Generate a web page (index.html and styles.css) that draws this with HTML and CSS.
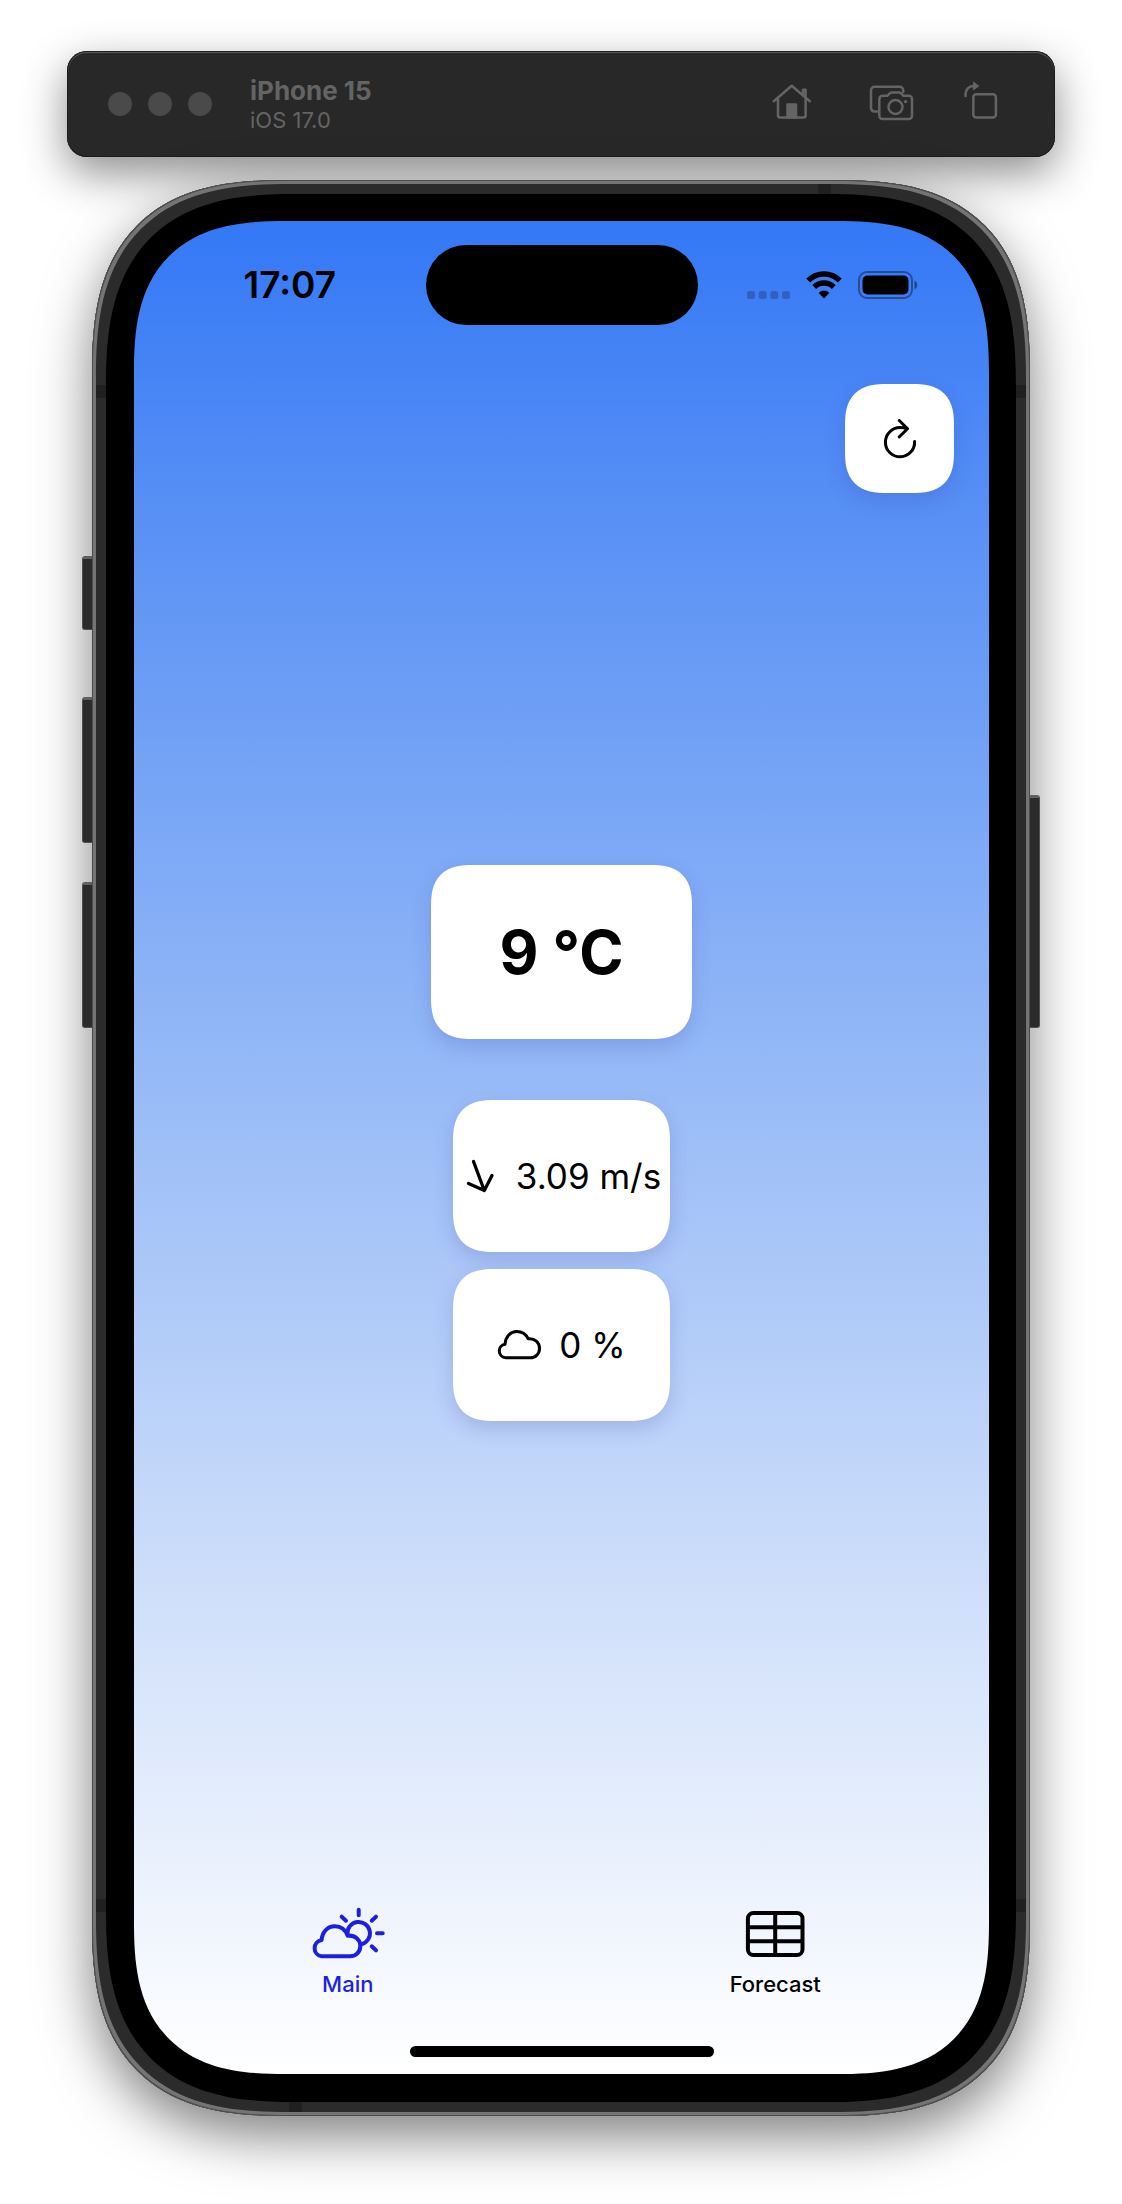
FILE: index.html
```html
<!DOCTYPE html>
<html lang="en">
<head>
<meta charset="utf-8">
<meta name="viewport" content="width=device-width, initial-scale=1">
<title>Weather – iPhone 15</title>
<link rel="stylesheet" href="styles.css">
</head>
<body>
<header class="toolbar">
  <div class="lights"><span class="light"></span><span class="light"></span><span class="light"></span></div>
  <div class="device">
    <h1 class="device-name">iPhone 15</h1>
    <p class="device-os">iOS 17.0</p>
  </div>
  <div class="tools">
    <button class="tool" type="button" aria-label="Home">
      <svg width="40" height="40" viewBox="0 0 40 40" fill="none" stroke="currentColor" stroke-width="2.500" stroke-linecap="round" stroke-linejoin="round"><path d="M1.8 20.3 19.7 4.8 37.8 20.3M6 17.5V34.5a2 2 0 0 0 2 2H31.6a2 2 0 0 0 2-2V17.5"/><path d="M31 14V8.8h2.6V17" /><path d="M15.5 36.500V23.500H24V36.500Z" fill="currentColor"/></svg>
    </button>
    <button class="tool" type="button" aria-label="Screenshot">
      <svg width="52" height="40" viewBox="0 0 52 40" fill="none" stroke="currentColor" stroke-width="2.500" stroke-linecap="round" stroke-linejoin="round"><path d="M15.500 30.500H12.400a3.400 3.400 0 0 1-3.400-3.400V9.200A3.400 3.400 0 0 1 12.400 5.800H37.800a3.400 3.400 0 0 1 3.400 3.400V11"/><path d="M20.500 14.800H25.200L28 12.200Q28.600 11.600 29.500 11.600H37.300Q38.200 11.600 38.800 12.200L41.500 14.800H46.800A3.200 3.200 0 0 1 50 18V34.800A3.200 3.200 0 0 1 46.800 38H20.500A3.200 3.200 0 0 1 17.300 34.800V18A3.200 3.200 0 0 1 20.500 14.800Z"/><circle cx="33.500" cy="26" r="7"/><circle cx="43.600" cy="20.600" r="1.700" fill="currentColor" stroke="none"/></svg>
    </button>
    <button class="tool" type="button" aria-label="Rotate">
      <svg width="34" height="40" viewBox="0 0 34 40" fill="none" stroke="currentColor" stroke-width="2.500" stroke-linecap="round" stroke-linejoin="round"><rect x="9.300" y="13.300" width="22.600" height="23.200" rx="3"/><path d="M1.500 15V13A8 8 0 0 1 9.300 5H10.500"/><path d="M9.700 1.300 14.800 5 9.700 8.700Z" fill="currentColor" stroke-width="1"/></svg>
    </button>
  </div>
</header>

<div class="phone">
  <span class="key key-action"></span>
  <span class="key key-up"></span>
  <span class="key key-down"></span>
  <span class="key key-power"></span>
  <span class="band band-top"></span>
  <span class="band band-bottom"></span>
  <span class="band band-side band-left band-upper"></span>
  <span class="band band-side band-right band-upper"></span>
  <span class="band band-side band-left band-lower"></span>
  <span class="band band-side band-right band-lower"></span>

  <div class="screen">
    <div class="status">
      <time class="clock">17:07</time>
      <div class="island"></div>
      <div class="signals">
        <svg width="43" height="28" viewBox="0 0 43 28" fill="#000" fill-opacity=".22"><rect x="0" y="20" width="8" height="8" rx="2.500"/><rect x="11.700" y="20" width="8" height="8" rx="2.500"/><rect x="23.300" y="20" width="8" height="8" rx="2.500"/><rect x="35" y="20" width="8" height="8" rx="2.500"/></svg>
        <svg width="36" height="28" viewBox="0 0 36 28"><path d="M2.200 9.500A22.500 22.500 0 0 1 33.800 9.500" fill="none" stroke="#000" stroke-width="5.400"/><path d="M8.200 16A14 14 0 0 1 27.800 16" fill="none" stroke="#000" stroke-width="5.400"/><path d="M12.600 21.700Q18 17.300 23.400 21.700L18 27.500Z"/></svg>
        <svg width="60" height="28" viewBox="0 0 60 28"><rect x="1" y="1" width="53" height="26" rx="8" fill="none" stroke="#000" stroke-opacity=".38" stroke-width="2"/><rect x="4.500" y="4.500" width="46" height="19" rx="5"/><path d="M56.500 9.500A5 5 0 0 1 56.500 18.500Z" fill-opacity=".45"/></svg>
      </div>
    </div>

    <div class="actions">
      <button class="card refresh" type="button" aria-label="Refresh">
        <svg width="36" height="40" viewBox="0 0 36 40" fill="none" stroke="currentColor" stroke-width="3" stroke-linecap="round" stroke-linejoin="round"><path d="M32.600 22.500A14.600 14.600 0 1 1 18 8.600Q22 8.600 25 9.600"/><path d="M17.300 1.500 25.500 9.700 17.300 17.900"/></svg>
      </button>
    </div>

    <main class="readings">
      <section class="card temperature">9 °C</section>
      <section class="card reading">
        <svg width="36" height="36" viewBox="0 0 36 36" fill="none" stroke="currentColor" stroke-width="3.300" stroke-linecap="round" stroke-linejoin="round"><path d="M11.500 3.500 22.300 32.500M6.500 25.500 22.300 32.500 30 17.500"/></svg>
        <span>3.09 m/s</span>
      </section>
      <section class="card reading">
        <svg width="44" height="32" viewBox="0 0 44 32" fill="none" stroke="currentColor" stroke-width="3" stroke-linejoin="round"><path d="M8.700 28.800A6.800 6.800 0 0 1 8 15.300C8.600 7.500 13.500 2.500 19.800 2.500C24.800 2.500 29 5.400 31.200 9.800C37.800 9 42.500 13.600 42.500 19.200C42.500 24.800 38.600 28.800 33.200 28.800Z"/></svg>
        <span>0 %</span>
      </section>
    </main>

    <nav class="tabs">
      <a class="tab tab-active" href="#main" aria-current="page">
        <svg width="74" height="52" viewBox="0 0 74 52" fill="none" stroke="currentColor" stroke-width="4" stroke-linecap="round" stroke-linejoin="round"><path d="M10.500 49.300A8.200 8.200 0 0 1 10.600 33.100C11.200 24.700 16.500 19.300 24 19.300C29.600 19.300 34.400 22.700 36.800 28.700C44 28 49.300 32.700 49.300 39C49.300 45 45 49.300 39.200 49.300Z"/><path d="M36.400 27A11.300 11.300 0 1 1 50.500 37.200"/><path d="M47.700 2.700V8.300M66 26.300H71.700M60.700 13.700 65 9.700M35 13.700 30.700 9.700M60.700 39.300 65 43.300"/></svg>
        <span>Main</span>
      </a>
      <a class="tab" href="#forecast">
        <svg width="60" height="52" viewBox="0 0 60 52" fill="none" stroke="currentColor" stroke-width="4"><rect x="2.900" y="6" width="54.600" height="42" rx="5.500"/><path d="M3 20.300H57.500M3 34.300H57.500M30.200 6V48"/></svg>
        <span>Forecast</span>
      </a>
    </nav>
    <div class="home-bar"></div>
  </div>
</div>
</body>
</html>
```
FILE: styles.css
```css
* {
  box-sizing: border-box;
}

body {
  margin: 0;
  padding: 51px 67px 88px;
  background: #fff;
  color: #000;
  font-family: Inter, "Liberation Sans", sans-serif;
}

button {
  padding: 0;
  border: 0;
  background: none;
  color: inherit;
  font: inherit;
}

svg {
  display: block;
  flex: none;
}

/* Simulator window bar */
.toolbar {
  position: relative;
  display: flex;
  align-items: center;
  min-height: 106px;
  padding: 0 57px 0 41px;
  border-radius: 20px;
  background: #282828;
  box-shadow: inset 0 0 0 1px #1c1c1c, inset 0 1px 0 1px #5a5a5a, 0 16px 44px rgba(0, 0, 0, .45);
  color: #646464;
}

.lights {
  display: flex;
  gap: 16px;
}

.light {
  width: 24px;
  height: 24px;
  border-radius: 50%;
  background: #4a4a4a;
}

.device {
  flex: 1;
  margin-left: 38px;
  padding-top: 2px;
}

.device-name,
.device-os {
  margin: 0;
}

.device-name {
  font-size: 26px;
  line-height: 30px;
  font-weight: 700;
}

.device-os {
  font-size: 22px;
  line-height: 28px;
}

.tools {
  display: flex;
  gap: 50px;
  padding-bottom: 6px;
}

/* Phone body */
.phone {
  position: relative;
  margin: 23px 25px 0;
  padding: 41px 41px 42px 42px;
  border-radius: 162px;
  background: #000;
  box-shadow:
    inset 0 0 0 1px #4c4c4c,
    inset 0 0 0 4px #747474,
    inset 0 0 0 14px #2b2b2b,
    0 20px 54px rgba(0, 0, 0, .5);
}

.key {
  position: absolute;
  left: -10px;
  width: 11px;
  height: 146px;
  border: 1px solid #505050;
  border-top: 3px solid #606060;
  border-radius: 3px 0 0 3px;
  background: #2b2b2b;
}

.key-action {
  top: 376px;
  height: 74px;
}

.key-up {
  top: 517px;
}

.key-down {
  top: 702px;
}

.key-power {
  top: 615px;
  right: -10px;
  left: auto;
  height: 233px;
  border-radius: 0 3px 3px 0;
}

.band {
  position: absolute;
  width: 13px;
  height: 10px;
  background: #202020;
}

.band-top {
  top: 4px;
  right: 199px;
}

.band-bottom {
  bottom: 4px;
  left: 197px;
}

.band-side {
  width: 10px;
  height: 13px;
}

.band-left {
  left: 4px;
}

.band-right {
  right: 4px;
}

.band-upper {
  top: 205px;
}

.band-lower {
  bottom: 204px;
}

.screen {
  display: flex;
  flex-direction: column;
  aspect-ratio: 855 / 1853;
  padding: 24px 0 17px;
  border-radius: 120px;
  background: linear-gradient(#3478f6, #6196f5 20%, #98bbf7 47%, #cfdffa 74%, #fff);
}

/* Status bar */
.status {
  display: grid;
  grid-template-columns: 1fr 272px 1fr;
  align-items: center;
}

.clock {
  padding-left: 20px;
  font-size: 37px;
  line-height: 44px;
  font-weight: 600;
  text-align: center;
}

.island {
  height: 80px;
  border-radius: 40px;
  background: #000;
}

.signals {
  display: flex;
  justify-content: center;
  gap: 16px;
  padding-right: 22px;
}

/* Weather cards */
.card {
  display: flex;
  align-items: center;
  justify-content: center;
  border-radius: 33px;
  background: #fff;
  box-shadow: 0 8px 20px rgba(60, 60, 160, .2);
}

.actions {
  display: flex;
  justify-content: flex-end;
  padding: 59px 35px 0;
}

.refresh {
  width: 109px;
  height: 109px;
}

.readings {
  display: flex;
  flex: 1;
  flex-direction: column;
  align-items: center;
  justify-content: center;
  gap: 17px;
}

.temperature {
  min-width: 261px;
  min-height: 174px;
  margin-bottom: 44px;
  font-size: 60px;
  line-height: 72px;
  font-weight: 700;
}

.reading {
  gap: 18px;
  min-width: 217px;
  min-height: 152px;
  font-size: 35px;
  line-height: 44px;
  white-space: nowrap;
}

/* Tab bar */
.tabs {
  display: flex;
  padding-top: 114px;
}

.tab {
  display: flex;
  flex: 1;
  flex-direction: column;
  align-items: center;
  gap: 11px;
  color: #000;
  font-size: 22px;
  line-height: 28px;
  font-weight: 500;
  text-decoration: none;
}

.tab-active {
  color: #1d1fe0;
}

.home-bar {
  align-self: center;
  width: 304px;
  height: 11px;
  margin-top: 48px;
  border-radius: 6px;
  background: #000;
}

/* Continuous corners where the browser can draw them */
@supports (corner-shape: superellipse(1.4)) {
  .phone,
  .screen,
  .card {
    corner-shape: superellipse(1.4);
  }

  .phone {
    border-radius: 196px;
  }

  .screen {
    border-radius: 152px;
  }

  .card {
    border-radius: 42px;
  }
}
```
